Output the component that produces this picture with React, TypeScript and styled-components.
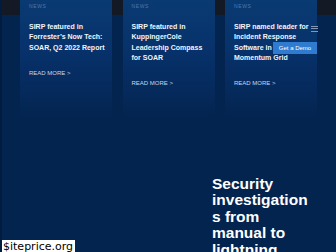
import styled, { createGlobalStyle } from "styled-components";

const Global = createGlobalStyle`
  html, body {
    margin: 0;
    padding: 0;
    background: #03244f;
  }
  * { box-sizing: border-box; }
`;

const Page = styled.div`
  position: relative;
  width: 336px;
  height: 252px;
  overflow: hidden;
  background: #03244f;
  border-left: 2px solid #021c40;
  font-family: "Liberation Sans", Arial, sans-serif;
`;

const CardsRow = styled.div`
  display: flex;
  gap: 10.5px;
  padding-left: 18px;
  background: linear-gradient(180deg, #141a25 0, #141a25 15px, transparent 15px);
`;

const Card = styled.div`
  width: 92px;
  height: 118px;
  padding: 2px 6.5px 0 9px;
  background: linear-gradient(180deg, #0a3a72 0%, #07316a 45%, #05295a 80%, #03244f 100%);
`;

const Tag = styled.div`
  font-size: 5px;
  line-height: 6px;
  letter-spacing: 0.6px;
  color: #4e78ad;
  margin-top: 1px;
`;

const Title = styled.div`
  margin-top: 12.5px;
  font-size: 7px;
  line-height: 10.6px;
  font-weight: 700;
  color: #f2f5fa;
`;

const ReadMore = styled.div`
  margin-top: 15.5px;
  font-size: 6px;
  line-height: 8px;
  color: #c9d6ea;
`;

const Hero = styled.div`
  margin-top: 58px;
  padding-left: 210px;
`;

const Heading = styled.h1`
  margin: 0;
  width: 96.5px;
  font-size: 15.5px;
  line-height: 16.4px;
  font-weight: 700;
  color: #ffffff;
  overflow-wrap: break-word;
`;

const Burger = styled.div`
  position: absolute;
  top: 26px;
  left: 309px;
  width: 7px;
  display: flex;
  flex-direction: column;
  gap: 1.3px;
`;

const BurgerLine = styled.span`
  display: block;
  height: 1px;
  background: #8396b3;
`;

const DemoButton = styled.button`
  position: absolute;
  top: 42px;
  left: 271px;
  width: 44px;
  height: 12px;
  padding: 0;
  border: none;
  background: #2f7bd0;
  color: #ffffff;
  font-family: "Liberation Sans", Arial, sans-serif;
  font-size: 6px;
  line-height: 12px;
`;

const Watermark = styled.div`
  position: absolute;
  left: 0;
  bottom: -1px;
  padding: 0 2px 0 1px;
  background: #ffffff;
  color: #000000;
  font-family: "DejaVu Sans", Verdana, sans-serif;
  font-size: 11px;
  line-height: 13px;
`;

const news = [
  "SIRP featured in Forrester\u2019s Now Tech: SOAR, Q2 2022 Report",
  "SIRP featured in KuppingerCole Leadership Compass for SOAR",
  "SIRP named leader for Incident Response Software in Momentum Grid",
];

export default function App() {
  return (
    <Page>
      <Global />
      <CardsRow>
        {news.map((title) => (
          <Card key={title}>
            <Tag>NEWS</Tag>
            <Title>{title}</Title>
            <ReadMore>READ MORE &gt;</ReadMore>
          </Card>
        ))}
      </CardsRow>
      <Hero>
        <Heading>Security investigations from manual to lightning fast</Heading>
      </Hero>
      <Burger>
        <BurgerLine />
        <BurgerLine />
        <BurgerLine />
      </Burger>
      <DemoButton>Get a Demo</DemoButton>
      <Watermark>$iteprice.org</Watermark>
    </Page>
  );
}
